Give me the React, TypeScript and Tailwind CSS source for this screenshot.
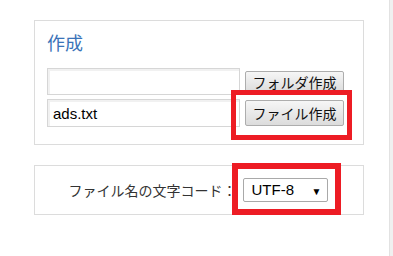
import React from "react";

const JP = "font-['Noto_Sans_CJK_JP','Noto_Sans',sans-serif]";
const LAT = "font-['Liberation_Sans',Arial,sans-serif]";

function Btn({ label, tall }: { label: string; tall?: boolean }) {
  return (
    <button
      className={`${JP} ${tall ? "h-[26px]" : "h-[22px]"} w-[99px] rounded-[2px] border border-[#adadad] bg-gradient-to-b from-[#f6f6f6] to-[#dcdcdc] text-[14px] leading-none text-[#111]`}
    >
      {label}
    </button>
  );
}

function Field({ value, h }: { value?: string; h: string }) {
  return (
    <input
      defaultValue={value}
      className={`${LAT} ${h} w-[193px] border border-[#d6d6d6] bg-white px-[5px] text-[15px] text-black shadow-[inset_2px_2px_0_#f1f1f1] outline-none`}
    />
  );
}

export default function App() {
  return (
    <div className="relative flex h-[256px] w-[393px] bg-white">
      <main className="w-[389px] pl-[34px] pt-[20px]">
        {/* create panel */}
        <section className="h-[125px] w-[330px] border border-[#dcdcdc] px-[12px] pt-[8px]">
          <h2 className={`${JP} text-[18px] leading-[26px] text-[#3a73b8]`}>作成</h2>
          <div className="mt-[13px] flex items-center gap-[5px]">
            <Field h="h-[27px]" />
            <Btn label="フォルダ作成" />
          </div>
          <div className="mt-[4px] flex items-center gap-[5px]">
            <Field h="h-[28px]" value="ads.txt" />
            <Btn label="ファイル作成" tall />
          </div>
        </section>

        {/* encoding panel */}
        <section className="mt-[20px] flex h-[50px] w-[330px] items-center justify-center border border-[#dcdcdc] pr-[2px]">
          <span className={`${JP} text-[14px] text-[#333]`}>ファイル名の文字コード：</span>
          <div className="relative ml-[6px] flex h-[24px] w-[85px] items-center rounded-[2px] border border-[#a9a9a9] bg-white pl-[8px]">
            <span className={`${LAT} text-[15px] text-black`}>UTF-8</span>
            <span className="absolute right-[5px] top-[5px] text-[10px] text-black">▼</span>
          </div>
        </section>
      </main>
      <div className="w-[4px] border-l border-[#e2e2e2] bg-[#f0f0f0]" />

      {/* highlight marks */}
      <div className="absolute left-[231px] top-[90px] h-[50px] w-[121px] border-[5px] border-[#ed1c24]" />
      <div className="absolute left-[232px] top-[163px] h-[52px] w-[109px] border-[6px] border-[#ed1c24]" />
    </div>
  );
}
